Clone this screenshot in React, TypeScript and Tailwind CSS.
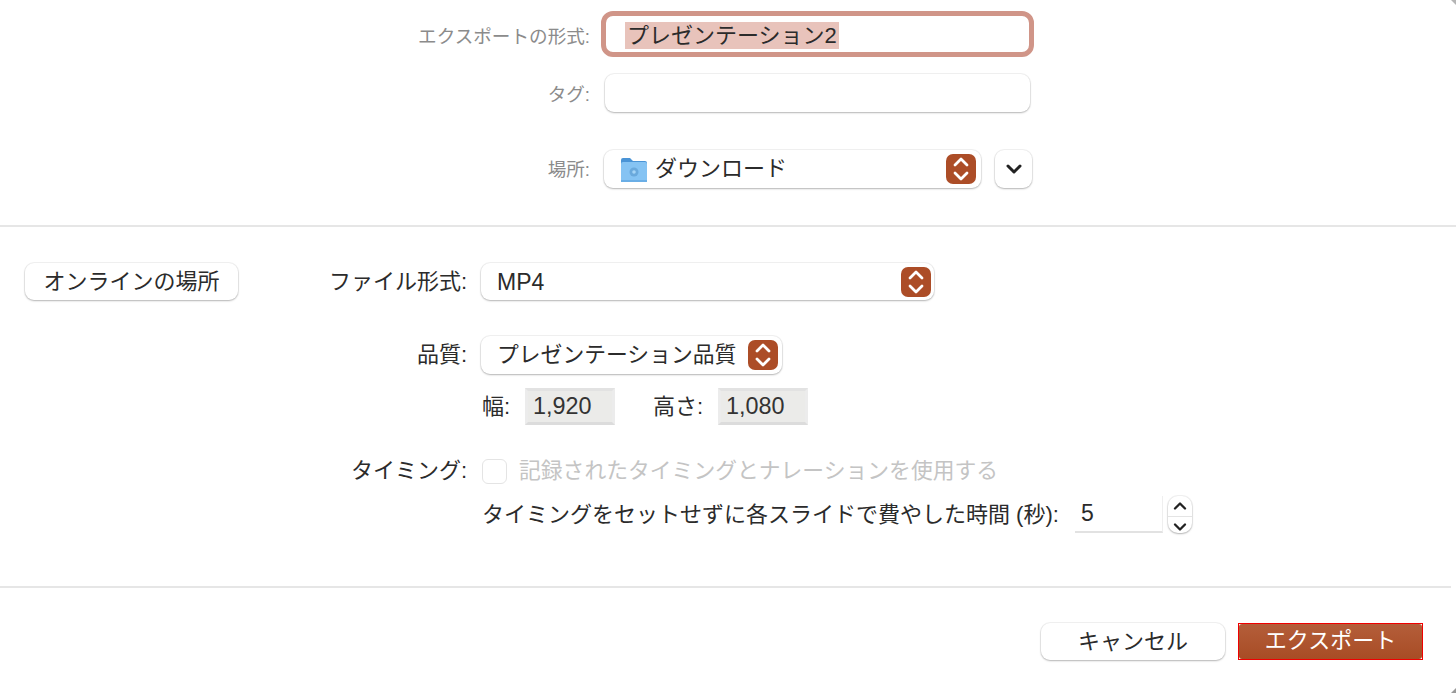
import { ChevronDown, ChevronUp } from 'lucide-react';

const jp = 'font-["Liberation_Sans","Noto_Sans_CJK_JP",sans-serif]';

function UpDownBadge() {
  return (
    <span className="flex h-[30px] w-[30px] shrink-0 flex-col items-center justify-center rounded-[7px] bg-[#ac4d27] text-white">
      <ChevronUp className="-my-[5px] h-[24px] w-[24px] shrink-0" strokeWidth={2.8} />
      <ChevronDown className="-my-[5px] h-[24px] w-[24px] shrink-0" strokeWidth={2.8} />
    </span>
  );
}

function FolderIcon() {
  return (
    <svg viewBox="0 0 28 28" className="h-[28px] w-[28px] shrink-0">
      <path d="M1 5a2 2 0 0 1 2-2h7l3 3h12a2 2 0 0 1 2 2v3H1z" fill="#4a94d6" />
      <rect x="1" y="7" width="26" height="20" rx="2" fill="#85c3f3" />
      <circle cx="14" cy="17" r="4.5" fill="#6aa9dc" />
      <circle cx="14" cy="17" r="1.8" fill="#a5d4f6" />
      <rect x="1" y="25" width="26" height="2" fill="#6aaee6" />
    </svg>
  );
}

const card = 'rounded-[9px] bg-white shadow-[0_1px_2px_rgba(0,0,0,0.25),0_0_0_1px_rgba(0,0,0,0.05)]';

function ReadOnlyBox({ value }: { value: string }) {
  return (
    <div className="flex h-[37px] w-[90px] items-center border-[3px] border-b-[#dcdcdc] border-l-[#ececec] border-r-[#ececec] border-t-[#e2e2e2] bg-[#ebebe9] pl-[5px] pt-[1px] text-[23.4px] text-[#333]">
      {value}
    </div>
  );
}

export default function App() {
  return (
    <div className={`relative h-[693px] w-[1456px] overflow-hidden bg-white ${jp} text-[#2b2b2b]`}>
      {/* Save panel: name, tags, location */}
      <section className="h-[227px] border-b-2 border-[#e6e6e6] pt-[11px]">
        <div className="flex items-center">
          <label className="w-[590px] pt-[6px] text-right text-[18.6px] text-[#8b8b8b]">エクスポートの形式:</label>
          <div className="ml-[11px] flex h-[46px] w-[433px] items-center rounded-[12px] border-[5px] border-[#d09588] bg-white pl-[19px]">
            <span className="mt-[2px] bg-[#e8c3bb] px-[2px] text-[22px] leading-[27px]">プレゼンテーション2</span>
          </div>
        </div>
        <div className="mt-[17px] flex items-center">
          <label className="w-[590px] pt-[4px] text-right text-[18.6px] text-[#8b8b8b]">タグ:</label>
          <div className={`ml-[15px] h-[38px] w-[425px] ${card}`} />
        </div>
        <div className="mt-[38px] flex items-center">
          <label className="w-[590px] pt-[1px] text-right text-[18.6px] text-[#8b8b8b]">場所:</label>
          <div className={`ml-[14px] flex h-[38px] w-[377px] items-center pl-[16px] pr-[5px] ${card}`}>
            <FolderIcon />
            <span className="ml-[7px] flex-1 text-[22px] leading-[30px]">ダウンロード</span>
            <UpDownBadge />
          </div>
          <button className={`ml-[14px] flex h-[38px] w-[37px] items-center justify-center ${card}`}>
            <ChevronDown className="h-[24px] w-[24px] text-[#222]" strokeWidth={3} />
          </button>
        </div>
      </section>

      {/* Format options */}
      <section className="h-[361px] w-[1451px] border-b-2 border-[#e6e6e6] pt-[36px]">
        <div className="flex items-center">
          <button className={`ml-[25px] h-[37px] w-[213px] text-[22px] leading-[30px] ${card}`}>オンラインの場所</button>
          <label className="w-[229px] text-right text-[22px] leading-[30px]">ファイル形式:</label>
          <div className={`ml-[14px] flex h-[37px] w-[453px] items-center pl-[16px] pr-[3px] ${card}`}>
            <span className="flex-1 text-[23px] leading-[30px]">MP4</span>
            <UpDownBadge />
          </div>
        </div>

        <div className="mt-[36px] flex items-center">
          <label className="w-[467px] text-right text-[22px] leading-[30px]">品質:</label>
          <div className={`ml-[14px] flex h-[38px] w-[301px] items-center pl-[16px] pr-[4px] ${card}`}>
            <span className="flex-1 whitespace-nowrap text-[21.8px] leading-[30px]">プレゼンテーション品質</span>
            <UpDownBadge />
          </div>
        </div>

        <div className="ml-[482px] mt-[14px] flex items-center">
          <span className="w-[43px] text-[22px] leading-[30px]">幅:</span>
          <ReadOnlyBox value="1,920" />
          <span className="ml-[38px] w-[65px] text-[22px] leading-[30px]">高さ:</span>
          <ReadOnlyBox value="1,080" />
        </div>

        <div className="mt-[31px] flex items-center">
          <label className="w-[467px] text-right text-[22px] leading-[30px]">タイミング:</label>
          <span className="ml-[15px] h-[25px] w-[25px] rounded-[6px] border border-[#e4e4e4] bg-white" />
          <span className="ml-[12px] text-[21.8px] leading-[30px] text-[#c4c4c4]">記録されたタイミングとナレーションを使用する</span>
        </div>

        <div className="ml-[482px] mt-[10px] flex items-center">
          <span className="w-[576px] whitespace-nowrap text-[22px] leading-[30px]">タイミングをセットせずに各スライドで費やした時間 (秒):</span>
          <div className="ml-[17px] flex h-[37px] w-[88px] items-center border-b-2 border-r border-[#e2e2e2] border-r-[#efefef] pl-[6px] text-[23px]">5</div>
          <div className={`ml-[5px] flex h-[37px] w-[24px] flex-col items-center rounded-[10px] ${card}`}>
            <span className="flex flex-1 items-center border-b border-[#e4e4e4] px-[2px]">
              <ChevronUp className="h-[20px] w-[20px] shrink-0 text-[#222]" strokeWidth={2.8} />
            </span>
            <span className="flex flex-1 items-center px-[2px]">
              <ChevronDown className="h-[20px] w-[20px] shrink-0 text-[#222]" strokeWidth={2.8} />
            </span>
          </div>
        </div>
      </section>

      {/* Actions */}
      <footer className="flex justify-end gap-[13px] pr-[33px] pt-[35px]">
        <button className={`h-[37px] w-[184px] text-[22px] leading-[30px] ${card}`}>キャンセル</button>
        <button className="h-[37px] w-[185px] border border-[#f00000] bg-white">
          <span className="block h-full w-full rounded-[3px] bg-[linear-gradient(#b45e3a,#a84c25)] text-[22px] leading-[33px] text-white">エクスポート</span>
        </button>
      </footer>

      {/* window corners */}
      <svg viewBox="0 0 5 5" className="absolute right-0 top-0 h-[5px] w-[5px]">
        <path d="M0 0h5v5z" fill="#b5b5b5" />
      </svg>
      <svg viewBox="0 0 5 5" className="absolute bottom-0 right-0 h-[5px] w-[5px]">
        <path d="M5 0v5H0z" fill="#9a9a9a" />
      </svg>
    </div>
  );
}
